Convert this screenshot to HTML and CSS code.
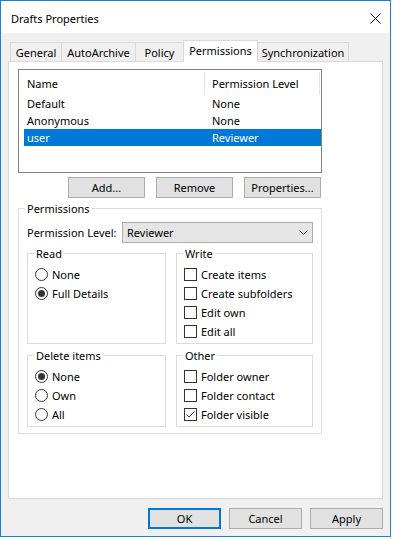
FILE: index.html
```html
<!DOCTYPE html>
<html lang="en">
<head>
<meta charset="utf-8">
<title>Drafts Properties</title>
<link rel="stylesheet" href="styles.css">
</head>
<body>
<div class="window">
  <div class="titlebar">
    <span class="title">Drafts Properties</span>
    <svg class="close" width="11" height="11" viewBox="0 0 11 11"><path d="M0.5 0.5 L10.5 10.5 M10.5 0.5 L0.5 10.5" stroke="#000" stroke-width="1" fill="none"/></svg>
  </div>
  <div class="content">
    <div class="tabs">
      <div class="tab t-general">General</div>
      <div class="tab t-auto">AutoArchive</div>
      <div class="tab t-policy">Policy</div>
      <div class="tab t-perm active">Permissions</div>
      <div class="tab t-sync">Synchronization</div>
    </div>
    <div class="panel">
      <div class="listbox">
        <div class="lv-header">
          <div class="lv-h h-name">Name</div>
          <div class="lv-h h-level">Permission Level</div>
        </div>
        <div class="lv-row"><span class="c-name">Default</span><span class="c-level">None</span></div>
        <div class="lv-row"><span class="c-name">Anonymous</span><span class="c-level">None</span></div>
        <div class="lv-row selected"><span class="c-name">user</span><span class="c-level">Reviewer</span></div>
      </div>
      <div class="btnrow">
        <button class="btn">Add...</button>
        <button class="btn">Remove</button>
        <button class="btn">Properties...</button>
      </div>
      <fieldset class="group perms">
        <legend>Permissions</legend>
        <div class="perms-inner">
          <div class="level-row">
            <span class="label">Permission Level:</span>
            <div class="select">
              <span>Reviewer</span>
              <svg class="chev" width="9" height="5" viewBox="0 0 9 5"><path d="M0.5 0.5 L4.5 4.5 L8.5 0.5" stroke="#444" stroke-width="1" fill="none"/></svg>
            </div>
          </div>
          <div class="grid">
            <fieldset class="group sub">
              <legend>Read</legend>
              <div class="sub-inner">
                <div class="opt"><span class="radio"></span>None</div>
                <div class="opt"><span class="radio on"></span>Full Details</div>
              </div>
            </fieldset>
            <fieldset class="group sub">
              <legend>Write</legend>
              <div class="sub-inner">
                <div class="opt"><span class="check"></span>Create items</div>
                <div class="opt"><span class="check"></span>Create subfolders</div>
                <div class="opt"><span class="check"></span>Edit own</div>
                <div class="opt"><span class="check"></span>Edit all</div>
              </div>
            </fieldset>
            <fieldset class="group sub">
              <legend>Delete items</legend>
              <div class="sub-inner">
                <div class="opt"><span class="radio on"></span>None</div>
                <div class="opt"><span class="radio"></span>Own</div>
                <div class="opt"><span class="radio"></span>All</div>
              </div>
            </fieldset>
            <fieldset class="group sub">
              <legend>Other</legend>
              <div class="sub-inner">
                <div class="opt"><span class="check"></span>Folder owner</div>
                <div class="opt"><span class="check"></span>Folder contact</div>
                <div class="opt"><span class="check"><svg width="11" height="11" viewBox="0 0 11 11"><path d="M1.5 5.5 L4 8 L9.5 2.5" stroke="#333" stroke-width="1" fill="none"/></svg></span>Folder visible</div>
              </div>
            </fieldset>
          </div>
        </div>
      </fieldset>
    </div>
    <div class="dlg-buttons">
      <button class="btn dlg default">OK</button>
      <button class="btn dlg">Cancel</button>
      <button class="btn dlg">Apply</button>
    </div>
  </div>
</div>
</body>
</html>
```
FILE: styles.css
```css
body {
  margin: 0;
  background: #fff;
  font: 11px "Noto Sans", "Liberation Sans", sans-serif;
  color: #000;
}

.window {
  box-sizing: border-box;
  width: 391px;
  height: 537px;
  border: 1px solid #1c7ed6;
  background: #f0f0f0;
  display: flex;
  flex-direction: column;
}

.titlebar {
  box-sizing: border-box;
  height: 32px;
  padding: 3px 9px 0 10px;
  background: #fff;
  display: flex;
  align-items: center;
}

.close {
  margin-left: auto;
  display: block;
}

.content {
  flex: 1;
  padding: 0 7px;
  display: flex;
  flex-direction: column;
}

.tabs {
  display: flex;
  align-items: flex-end;
  height: 28px;
  padding-left: 2px;
  flex: none;
}

.tab {
  box-sizing: border-box;
  height: 19px;
  border: 1px solid #d9d9d9;
  border-bottom: none;
  margin-left: -1px;
  display: flex;
  align-items: center;
  justify-content: center;
  background: #f0f0f0;
}

.tab:first-child { margin-left: 0; }
.t-general { width: 52px; }
.t-auto { width: 75px; }
.t-policy { width: 49px; }
.t-perm { width: 75px; }
.t-sync { width: 92px; }

.tab.active {
  height: 22px;
  margin-bottom: -1px;
  padding-bottom: 2px;
  background: #fff;
  position: relative;
  z-index: 1;
}

.panel {
  box-sizing: border-box;
  height: 438px;
  border: 1px solid #d9d9d9;
  background: #fff;
  padding: 7px 0 0 9px;
  flex: none;
}

.listbox {
  box-sizing: border-box;
  width: 304px;
  height: 104px;
  border: 1px solid #828282;
  padding: 2px 0 0 5px;
}

.lv-header {
  display: flex;
  height: 23px;
}

.lv-h {
  box-sizing: border-box;
  display: flex;
  align-items: center;
  border-right: 1px solid #e5e5e5;
}

.h-name { width: 181px; padding-left: 3px; }
.h-level { width: 115px; padding-left: 7px; }

.lv-row {
  display: flex;
  align-items: center;
  height: 17px;
}

.c-name {
  box-sizing: border-box;
  width: 188px;
  padding-left: 3px;
}

.lv-row.selected {
  background: #0078d7;
  color: #fff;
}

.btnrow {
  display: flex;
  justify-content: flex-end;
  gap: 11px;
  width: 303px;
  margin-top: 4px;
}

.btn {
  box-sizing: border-box;
  width: 77px;
  height: 21px;
  border: 1px solid #adadad;
  background: #e1e1e1;
  font: inherit;
  color: #000;
  padding: 0;
  margin: 0;
}

.group {
  margin: 0;
  padding: 0;
  border: 1px solid #dcdcdc;
  min-width: 0;
}

.group legend {
  margin-left: 6px;
  padding: 0 2px;
  line-height: 15px;
}

.perms {
  box-sizing: border-box;
  width: 304px;
  margin-top: 3px;
}

.perms-inner {
  padding: 6px 8px 6px;
}

.level-row {
  display: flex;
  align-items: center;
  height: 21px;
}

.select {
  box-sizing: border-box;
  margin-left: auto;
  width: 191px;
  height: 21px;
  border: 1px solid #acacac;
  background: #e5e5e5;
  display: flex;
  align-items: center;
  justify-content: space-between;
  padding: 0 4px;
}

.chev { display: block; }

.grid {
  display: grid;
  grid-template-columns: 139px 137px;
  column-gap: 10px;
  row-gap: 4px;
  margin-top: 3px;
}

.sub-inner {
  padding: 4px 0 2px 7px;
}

.opt {
  display: flex;
  align-items: center;
  gap: 4px;
  height: 19px;
}

.radio,
.check {
  box-sizing: border-box;
  flex: none;
  width: 13px;
  height: 13px;
  border: 1px solid #333;
  background: #fff;
  display: flex;
  align-items: center;
  justify-content: center;
}

.radio { border-radius: 50%; }

.radio.on::after {
  content: "";
  width: 7px;
  height: 7px;
  border-radius: 50%;
  background: #333;
}

.check svg { display: block; }

.dlg-buttons {
  display: flex;
  justify-content: flex-end;
  gap: 8px;
  margin-top: 9px;
}

.btn.dlg { width: 73px; }

.btn.default { border: 2px solid #0078d7; }
```
